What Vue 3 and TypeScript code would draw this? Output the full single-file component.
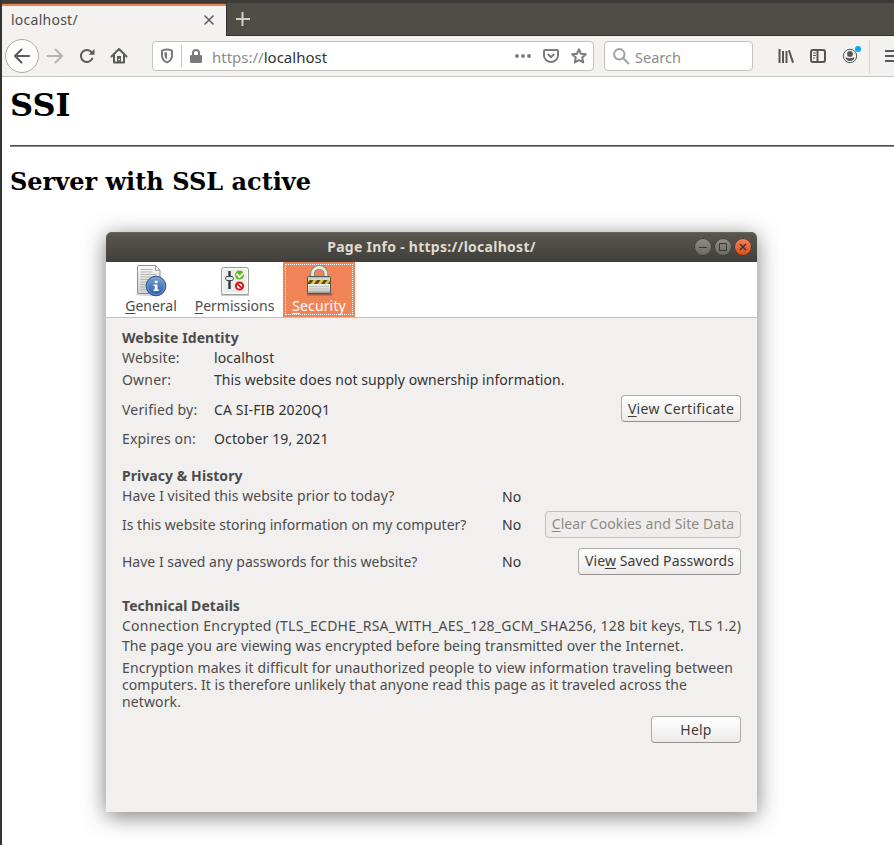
<script setup lang="ts">
interface IdentityRow {
  label: string
  value: string
  kind: string
}

const identity: IdentityRow[] = [
  { label: 'Website:', value: 'localhost', kind: 'website' },
  { label: 'Owner:', value: 'This website does not supply ownership information.', kind: 'owner' },
  { label: 'Verified by:', value: 'CA SI-FIB 2020Q1', kind: 'verified' },
  { label: 'Expires on:', value: 'October 19, 2021', kind: 'expires' },
]
</script>

<template>
  <div class="browser">
    <div class="top-edge"></div>
    <div class="tabs">
      <div class="tab">
        <span class="tab-title">localhost/</span>
        <svg class="tab-close" width="12" height="12" viewBox="0 0 12 12"><path d="M1.5 1.5l9 9M10.5 1.5l-9 9" /></svg>
      </div>
      <div class="tab-rest">
        <svg width="16" height="16" viewBox="0 0 16 16"><path d="M7.500 1v14M1 8h14" /></svg>
      </div>
    </div>

    <div class="nav">
      <div class="back">
        <svg width="18" height="18" viewBox="0 0 18 18"><path d="M16 9H2M8.500 2.500L2 9l6.500 6.500" /></svg>
      </div>
      <svg class="forward" width="18" height="18" viewBox="0 0 18 18"><path d="M1.500 9H16M9.500 2.500L16 9l-6.500 6.500" /></svg>
      <svg class="reload" width="16" height="16" viewBox="0 0 16 16">
        <path d="M13.300 10.600A6 6 0 1 1 12.600 4.200" />
        <path class="solid" d="M15.500 1v5.800H9.700z" />
      </svg>
      <svg class="home" width="18" height="18" viewBox="0 0 18 18">
        <path d="M1.500 9.500L9 2l7.500 7.500M4 8v7.500h10V8" />
        <path class="solid" d="M7 9h4v6.500H7z" />
        <path class="hole" d="M8.500 11.800h1.500v1.500H8.500z" />
      </svg>

      <div class="url">
        <svg class="shield" width="14" height="16" viewBox="0 0 14 16">
          <path d="M7 1.600c-1.800 0-3.500.4-5 1v4.600c0 3.700 2 6.100 5 7.200 3-1.100 5-3.500 5-7.200V2.600c-1.500-.6-3.200-1-5-1z" />
          <path class="solid" d="M7 4.200v7.400c-1.600-1-2.500-2.500-2.500-4.600V4.600c.8-.3 1.600-.4 2.500-.4z" />
        </svg>
        <div class="url-divider"></div>
        <svg class="lock" width="12" height="14" viewBox="0 0 12 14">
          <path d="M3 6.500V4a3 3 0 0 1 6 0v2.500" />
          <rect x="0" y="6" width="12" height="8" rx="1.300" />
        </svg>
        <span class="url-text"><span class="scheme">https://</span>localhost</span>
        <svg class="dots" width="16" height="6" viewBox="0 0 16 6">
          <circle cx="2" cy="3" r="1.900" /><circle cx="8" cy="3" r="1.900" /><circle cx="14" cy="3" r="1.900" />
        </svg>
        <svg class="pocket" width="16" height="14" viewBox="0 0 16 14">
          <path d="M2 1h12a1 1 0 0 1 1 1v4.500a7 6.500 0 0 1-14 0V2a1 1 0 0 1 1-1z" />
          <path d="M4.800 5L8 8.200 11.200 5" />
        </svg>
        <svg class="star" width="16" height="16" viewBox="0 0 16 16">
          <path d="M8 1.300l1.900 4.400 4.900.5-3.600 3.300 1 4.900L8 12l-4.200 2.400 1-4.900L1.200 6.200l4.900-.5z" />
        </svg>
      </div>

      <div class="search">
        <svg width="17" height="17" viewBox="0 0 17 17"><circle cx="6.300" cy="6.300" r="5.200" /><path d="M10.200 10.200l5.800 5.800" /></svg>
        <span>Search</span>
      </div>

      <svg class="library" width="16" height="14" viewBox="0 0 16 14">
        <path d="M1.500 0v14M5 2v12M8.500 2v12M10.900 1.300L15 13.600" />
      </svg>
      <svg class="sidebar" width="16" height="14" viewBox="0 0 16 14">
        <rect x="1" y="1" width="14" height="12" rx="2" />
        <path d="M7.500 1v12" />
        <path class="thin" d="M3 4h3M3 6.500h3M3 9h2" />
      </svg>
      <div class="account">
        <svg width="16" height="16" viewBox="0 0 16 16">
          <circle class="ring" cx="8" cy="8" r="6.700" />
          <circle cx="8" cy="6" r="2.900" />
          <path d="M3.500 9.400c.9-.5 1.400.8 4.500.8s3.600-1.300 4.500-.8c-.3 2.200-2.200 3.500-4.500 3.500S3.800 11.600 3.500 9.400z" />
        </svg>
        <i class="account-badge"></i>
      </div>
      <div class="nav-divider"></div>
      <div class="menu"><i></i><i></i><i></i></div>
    </div>

    <main class="page">
      <h1>SSI</h1>
      <hr />
      <h2>Server with SSL active</h2>
    </main>

    <section class="dialog">
      <header class="titlebar">
        <span class="title">Page Info - https://localhost/</span>
        <div class="controls">
          <i class="control"><svg width="18" height="18" viewBox="0 0 18 18"><path d="M5 9.500h8" /></svg></i>
          <i class="control"><svg width="18" height="18" viewBox="0 0 18 18"><path d="M5.500 5.500h7v7h-7z" /></svg></i>
          <i class="control close"><svg width="18" height="18" viewBox="0 0 18 18"><path d="M6 6l6 6M12 6l-6 6" /></svg></i>
        </div>
      </header>

      <nav class="sections">
        <div class="section general">
          <svg width="32" height="32" viewBox="0 0 32 32">
            <defs>
              <linearGradient id="paper" x1="0" y1="0" x2="0" y2="1"><stop offset="0" stop-color="#fafaf9" /><stop offset="1" stop-color="#cfd0cc" /></linearGradient>
              <linearGradient id="info" x1="0" y1="0" x2="0" y2="1"><stop offset="0" stop-color="#7ba0d3" /><stop offset="1" stop-color="#2a5da6" /></linearGradient>
            </defs>
            <ellipse cx="14" cy="29.500" rx="14" ry="1.500" fill="#d4d4d2" />
            <path d="M3.500.5h17l4.500 5v23H3.500a1 1 0 0 1-1-1v-26a1 1 0 0 1 1-1z" fill="url(#paper)" stroke="#8e908b" />
            <path d="M20.500.5v5H25z" fill="#fff" stroke="#8e908b" stroke-width=".8" />
            <path d="M5.500 4.500h12M5.500 7h12M5.500 9.500h16M5.500 12h13M5.500 14.500h9M5.500 17h7M5.500 19.500h7M5.500 22h6M5.500 24.500h7" stroke="#b4b5b1" />
            <circle cx="21" cy="21" r="9.800" fill="url(#info)" stroke="#254f91" />
            <circle cx="21" cy="21" r="8.600" fill="none" stroke="#7da3d6" stroke-width=".7" />
            <path d="M19.800 15.700h2.800v2.400h-2.800zM18.500 19.500h4v5h1.300V26h-5.300v-1.500h1.300V21h-1.300z" fill="#fff" />
          </svg>
          <span><u>G</u>eneral</span>
        </div>
        <div class="section permissions">
          <svg width="32" height="32" viewBox="0 0 32 32">
            <path d="M2 30h28" stroke="#c8c8c6" stroke-width="2" />
            <rect x="2.500" y="2.500" width="27" height="27" rx="2" fill="#ececea" stroke="#9a9c98" />
            <rect x="3.800" y="3.800" width="24.400" height="24.400" rx="1" fill="none" stroke="#fff" />
            <path d="M10.500 6v18" stroke="#31363a" stroke-width="2.400" />
            <path d="M7.500 11.500h6l1 2-1 2h-6l-1-2z" fill="#e8e9e7" stroke="#464b4e" />
            <circle cx="20.500" cy="10" r="4.500" fill="#62b91c" />
            <path d="M17.500 8.700l3 3.500L25 7.500" fill="none" stroke="#fff" stroke-width="1.800" />
            <circle cx="20.500" cy="21" r="3.600" fill="#fff" stroke="#d41920" stroke-width="2" />
            <path d="M17.800 18.300l5.400 5.400" stroke="#d41920" stroke-width="1.800" />
          </svg>
          <span><u>P</u>ermissions</span>
        </div>
        <div class="section security">
          <svg width="32" height="32" viewBox="0 0 32 32">
            <defs>
              <linearGradient id="steel" x1="0" y1="0" x2="0" y2="1"><stop offset="0" stop-color="#b5b6b2" /><stop offset=".3" stop-color="#f2f2f0" /><stop offset=".8" stop-color="#d8d9d6" /><stop offset="1" stop-color="#8a8c88" /></linearGradient>
            </defs>
            <path d="M4 29.300h25" stroke="#a55e43" stroke-width="2.400" />
            <path d="M9.500 12V8.500a6.700 6 0 0 1 13.400 0V12" fill="none" stroke="#82847f" stroke-width="4.600" />
            <path d="M9.500 12V8.500a6.700 6 0 0 1 13.400 0V12" fill="none" stroke="#e8e9e6" stroke-width="2.800" />
            <rect x="4.500" y="11.500" width="23" height="17" rx="1" fill="url(#steel)" stroke="#555753" />
            <path d="M5 15h22v4H5z" fill="#dec733" />
            <path d="M7 15h3.500l-3 4H5v-1.500zM14 15h3.500l-3 4H11zM21 15h3.500l-3 4H18zM27 16v3h-2.200z" fill="#514c25" />
            <path d="M6 21.500h20M6 24h20M6 26.500h20" stroke="#b7b8b5" stroke-width=".8" />
          </svg>
          <span><u>S</u>ecurity</span>
        </div>
      </nav>

      <div class="details">
        <h3>Website Identity</h3>
        <div v-for="row in identity" :key="row.kind" class="row" :class="row.kind">
          <span class="label">{{ row.label }}</span>
          <span class="value">{{ row.value }}</span>
          <button v-if="row.kind === 'verified'" class="view-cert"><span><u>V</u>iew Certificate</span></button>
        </div>

        <h3 class="privacy">Privacy &amp; History</h3>
        <div class="row visited">
          <span class="question">Have I visited this website prior to today?</span>
          <span class="value">No</span>
        </div>
        <div class="row storing">
          <span class="question">Is this website storing information on my computer?</span>
          <span class="value">No</span>
          <button class="clear" disabled><span><u>C</u>lear Cookies and Site Data</span></button>
        </div>
        <div class="row saved">
          <span class="question">Have I saved any passwords for this website?</span>
          <span class="value">No</span>
          <button class="view-pass"><span>Vie<u>w</u> Saved Passwords</span></button>
        </div>

        <h3 class="technical">Technical Details</h3>
        <p class="cipher">Connection Encrypted (TLS_ECDHE_RSA_WITH_AES_128_GCM_SHA256, 128 bit keys, TLS 1.2)</p>
        <p class="sent">The page you are viewing was encrypted before being transmitted over the Internet.</p>
        <p class="about">
          <span class="l1">Encryption makes it difficult for unauthorized people to view information traveling between</span><br />
          <span class="l2">computers. It is therefore unlikely that anyone read this page as it traveled across the</span><br />
          <span class="l1">network.</span>
        </p>
        <div class="help-row"><button class="help"><span>Help</span></button></div>
      </div>
    </section>
  </div>
</template>

<style>
body {
  background: #fff;
  overflow: hidden;
}
</style>

<style scoped>
* {
  box-sizing: border-box;
}
svg {
  display: block;
  flex: none;
}
.browser {
  position: relative;
  width: 894px;
  height: 845px;
  overflow: hidden;
  border-left: 2px solid #343330;
  background: #fff;
  color: #4c4c4c;
  font: 14px/20px "Noto Sans", sans-serif;
  white-space: nowrap;
}
.top-edge {
  height: 3px;
  background: #3c3b37;
}
.tabs {
  display: flex;
  height: 33px;
  background: #504d46;
}
.tab {
  display: flex;
  align-items: center;
  justify-content: space-between;
  width: 224px;
  margin-top: 1px;
  padding: 0 11px 2px 9px;
  border-top: 2px solid #f0814f;
  background: #f3f2f1;
  color: #4c4c4c;
}
.tab-title {
  letter-spacing: 0.25px;
}
.tab-close path {
  fill: none;
  stroke: #5c5c5b;
  stroke-width: 1.5;
}
.tab-rest {
  flex: 1;
  padding: 8px 0 0 8px;
  border-left: 1px solid #33322e;
  border-bottom: 1px solid #33322e;
}
.tab-rest path {
  stroke: #d0cfcb;
  stroke-width: 2;
}
.nav {
  display: flex;
  align-items: center;
  height: 41px;
  padding-left: 3px;
  border-bottom: 1px solid #c9c5c1;
  background: #f3f2f1;
}
.nav > * {
  flex: none;
}
.back {
  display: grid;
  place-items: center;
  width: 34px;
  height: 34px;
  border: 1px solid #adabaa;
  border-radius: 50%;
  background: #fcfcfc;
}
.back path,
.forward path,
.reload path,
.home path {
  fill: none;
  stroke: #5b5b5b;
  stroke-width: 2;
  stroke-linejoin: round;
  stroke-linecap: round;
}
.reload .solid,
.home .solid {
  fill: #5b5b5b;
  stroke: none;
}
.home .hole {
  fill: #f3f2f1;
  stroke: none;
}
.forward {
  margin-left: 7px;
}
.forward path {
  stroke: #b5b4b3;
}
.reload {
  margin-left: 15px;
}
.home {
  margin-left: 15px;
}
.url,
.search {
  display: flex;
  align-items: center;
  height: 30px;
  border: 1px solid #c4c1be;
  border-radius: 4px;
  background: #fff;
}
.url {
  width: 442px;
  margin-left: 24px;
  padding: 0 6px 0 7px;
}
.shield path,
.pocket path,
.star path {
  fill: none;
  stroke: #7b7b7b;
  stroke-width: 2;
  stroke-linejoin: round;
}
.shield .solid {
  fill: #7b7b7b;
  stroke: none;
}
.url-divider {
  width: 1px;
  height: 22px;
  margin: 0 8px 0 7px;
  background: #c9c7c6;
}
.lock path {
  fill: none;
  stroke: #7b7b7b;
  stroke-width: 2;
}
.lock rect,
.dots circle {
  fill: #7b7b7b;
}
.url-text {
  margin-left: 10px;
  padding-top: 1px;
  color: #333;
  font-size: 15px;
}
.scheme {
  color: #8b8b8b;
}
.dots {
  margin-left: auto;
}
.pocket {
  margin: 0 12px;
}
.search {
  width: 149px;
  margin-left: 10px;
  padding-left: 8px;
  color: #8b8b8b;
  font-size: 14.5px;
}
.search span {
  padding-top: 2px;
}
.search svg {
  margin-right: 5px;
}
.search circle,
.search path {
  fill: none;
  stroke: #a3a3a3;
  stroke-width: 2;
}
.library {
  margin-left: 25px;
}
.library path,
.sidebar path,
.sidebar rect {
  fill: none;
  stroke: #565655;
  stroke-width: 2;
}
.sidebar {
  margin-left: 16px;
}
.sidebar .thin {
  stroke-width: 1;
}
.account {
  position: relative;
  margin-left: 16px;
}
.account svg {
  fill: #565655;
}
.account .ring {
  fill: none;
  stroke: #565655;
  stroke-width: 1;
}
.account-badge {
  position: absolute;
  top: -2px;
  right: -3px;
  width: 6px;
  height: 6px;
  border-radius: 50%;
  background: #00adf5;
}
.nav-divider {
  width: 1px;
  height: 33px;
  margin-left: 11px;
  background: #d4d2d0;
}
.menu {
  display: grid;
  gap: 3px;
  width: 16px;
  margin-left: 15px;
}
.menu i {
  height: 2px;
  background: #565655;
}
.page {
  padding: 9px 0 0 8px;
  color: #000;
  font-family: "DejaVu Serif", serif;
}
.page h1 {
  margin: 0;
  font-size: 32px;
  line-height: 38px;
}
.page hr {
  height: 2px;
  margin: 21px 0 0;
  border: 0;
  border-top: 1px solid #4f4c4e;
  background: #8d8b8c;
}
.page h2 {
  margin: 21px 0 0;
  font-size: 24px;
  line-height: 28px;
}
.dialog {
  position: absolute;
  top: 232px;
  left: 104px;
  width: 651px;
  height: 580px;
  border-radius: 6px 6px 0 0;
  background: #f1f0ee;
  box-shadow: 0 4px 22px rgba(0, 0, 0, 0.52);
}
.titlebar {
  display: grid;
  grid-template-columns: 1fr 58px;
  align-items: center;
  height: 30px;
  padding-right: 5px;
  border-radius: 6px 6px 0 0;
  background: linear-gradient(#5a574f, #403f3a);
  box-shadow: inset 0 1px #68655d;
}
.title {
  padding-left: 63px;
  color: #dfdbd2;
  font-weight: 700;
  letter-spacing: 0.27px;
  text-align: center;
}
.controls {
  display: flex;
  gap: 2px;
}
.control {
  width: 18px;
  height: 18px;
  border-radius: 50%;
  background: linear-gradient(#918f88, #6a6861);
  box-shadow: inset 0 0 0 1px #3a3935;
}
.control path {
  fill: none;
  stroke: #393834;
}
.control.close {
  background: linear-gradient(#f8835d, #dd4814);
}
.control.close path {
  stroke-width: 1.6;
}
.sections {
  display: flex;
  height: 56px;
  padding-left: 10px;
  border-bottom: 1px solid #c3c0bd;
  background: #fff;
}
.section {
  display: flex;
  flex-direction: column;
  align-items: center;
  height: 55px;
  padding-top: 3px;
  line-height: 18px;
}
u {
  text-decoration-thickness: 1px;
  text-underline-offset: 2px;
  text-decoration-skip-ink: none;
}
.general {
  width: 70px;
}
.permissions {
  width: 97px;
}
.security {
  width: 72px;
  outline: 1px dotted #fff;
  outline-offset: -3px;
  background: #f08457;
  color: #fff;
  letter-spacing: 0.15px;
}
.details {
  padding: 10px 16px 0;
}
h3 {
  margin: 0;
  font-size: 14px;
  line-height: 20px;
  letter-spacing: 0.06px;
}
.row {
  display: flex;
  align-items: center;
  height: 20px;
}
.label {
  width: 92px;
  letter-spacing: 0.18px;
}
.value {
  color: #333;
  letter-spacing: 0.13px;
}
.question {
  width: 380px;
}
.visited .question {
  letter-spacing: 0.05px;
}
.visited .value {
  padding-top: 2px;
}
.owner,
.expires {
  height: 24px;
}
.owner .value {
  letter-spacing: 0.06px;
}
.verified {
  height: 35px;
}
.privacy {
  margin-top: 15px;
}
.storing {
  height: 38px;
}
.saved {
  height: 36px;
}
.technical {
  margin-top: 16px;
}
p {
  margin: 0;
}
.cipher {
  letter-spacing: 0.24px;
}
.sent {
  letter-spacing: 0.09px;
}
.about {
  margin-top: 3px;
  line-height: 17px;
}
.l1 {
  letter-spacing: 0.12px;
}
.l2 {
  letter-spacing: 0.05px;
}
button {
  display: block;
  height: 27px;
  margin: 0 0 0 auto;
  padding: 0;
  border: 1px solid #aeaba8;
  border-bottom-color: #94918e;
  border-radius: 4px;
  background: linear-gradient(#fff, #edebea);
  color: #3c3c3c;
  font: inherit;
}
.row button {
  margin-bottom: 2px;
}
button:disabled {
  border-color: #c4c2c0;
  background: #eeedeb;
  color: #8d8a86;
}
.view-cert {
  width: 120px;
  letter-spacing: 0.3px;
}
.clear {
  width: 196px;
  letter-spacing: 0.08px;
}
.view-pass {
  width: 163px;
  letter-spacing: 0.1px;
}
.help {
  width: 90px;
  letter-spacing: 0.2px;
}
.help-row {
  margin-top: 6px;
}
</style>
